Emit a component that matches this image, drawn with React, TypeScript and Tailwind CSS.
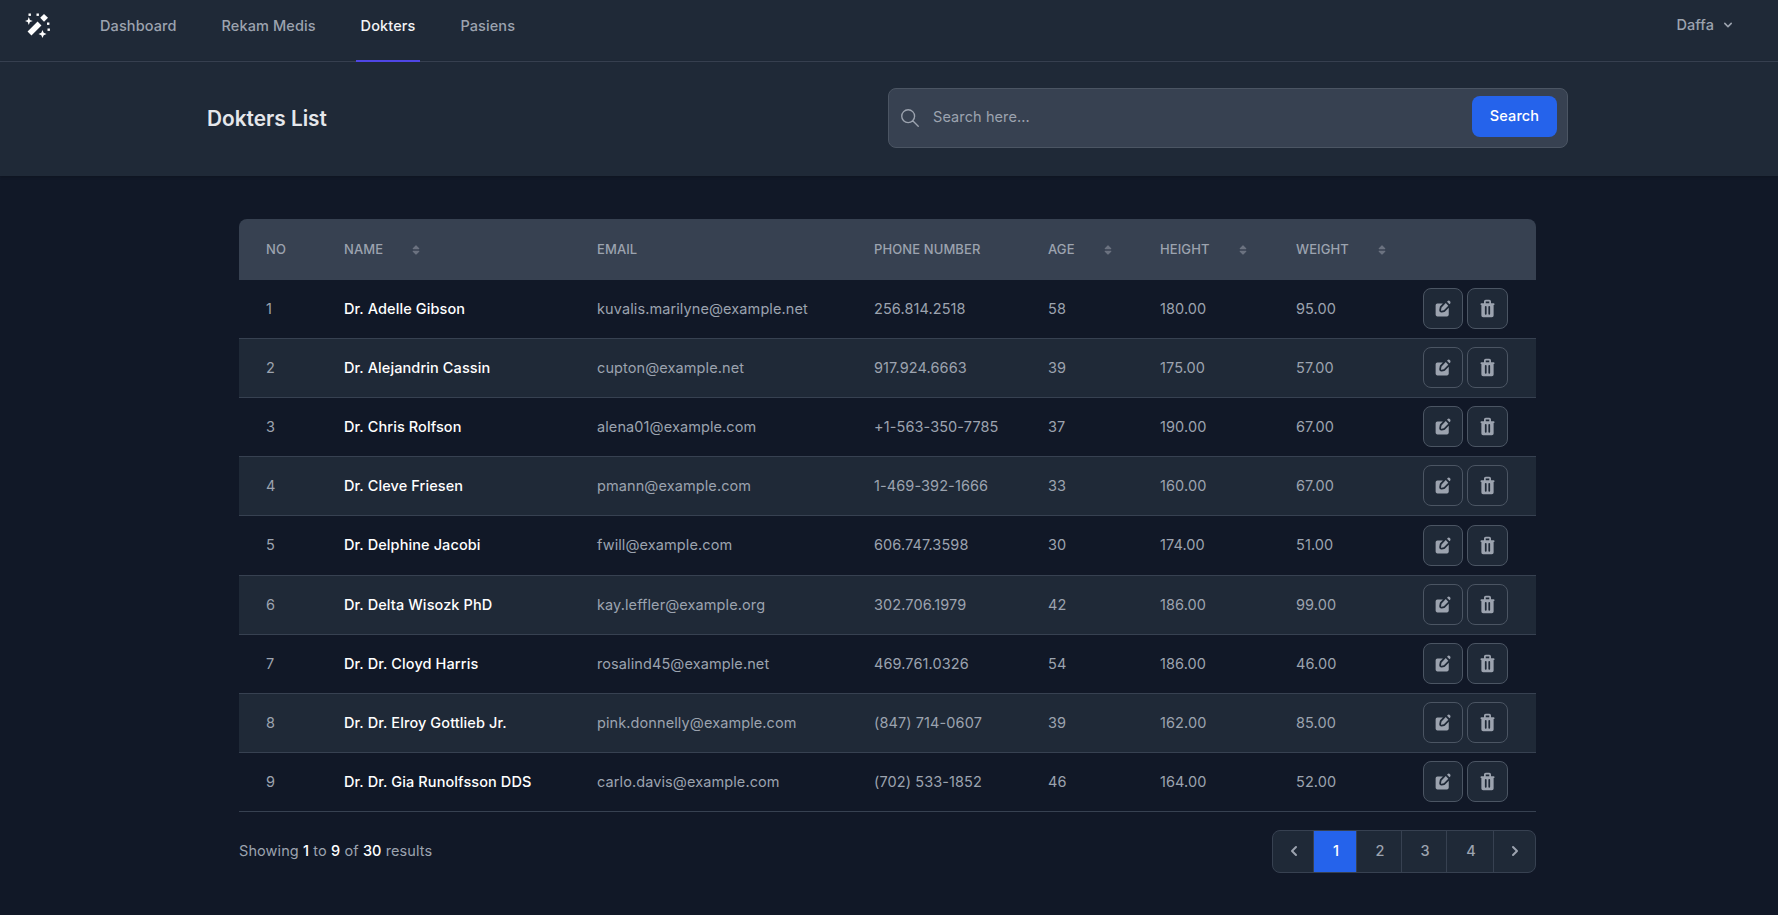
import { FaSort } from "react-icons/fa";
import { HiChevronDown, HiChevronLeft, HiChevronRight, HiOutlineSearch } from "react-icons/hi";

const doctors = [
  ["Dr. Adelle Gibson", "kuvalis.marilyne@example.net", "256.814.2518", "58", "180.00", "95.00"],
  ["Dr. Alejandrin Cassin", "cupton@example.net", "917.924.6663", "39", "175.00", "57.00"],
  ["Dr. Chris Rolfson", "alena01@example.com", "+1-563-350-7785", "37", "190.00", "67.00"],
  ["Dr. Cleve Friesen", "pmann@example.com", "1-469-392-1666", "33", "160.00", "67.00"],
  ["Dr. Delphine Jacobi", "fwill@example.com", "606.747.3598", "30", "174.00", "51.00"],
  ["Dr. Delta Wisozk PhD", "kay.leffler@example.org", "302.706.1979", "42", "186.00", "99.00"],
  ["Dr. Dr. Cloyd Harris", "rosalind45@example.net", "469.761.0326", "54", "186.00", "46.00"],
  ["Dr. Dr. Elroy Gottlieb Jr.", "pink.donnelly@example.com", "(847) 714-0607", "39", "162.00", "85.00"],
  ["Dr. Dr. Gia Runolfsson DDS", "carlo.davis@example.com", "(702) 533-1852", "46", "164.00", "52.00"],
];

const navLinks = ["Dashboard", "Rekam Medis", "Dokters", "Pasiens"];

// wand with sparkles, drawn from the reference
function Logo() {
  return (
    <svg viewBox="0 0 25 25" className="h-[25px] w-[25px]" fill="#ffffff">
      <line x1="4.5" y1="20.5" x2="14.5" y2="10.5" stroke="#ffffff" strokeWidth="5.5" />
      <polygon points="19,1 23,4.8 19,8.8 15.2,4.8" />
      <path d="M3.8 4 L4.9 6.9 L7.8 8 L4.9 9.1 L3.8 12 L2.7 9.1 L0 8 L2.7 6.9 Z" />
      <path d="M17.5 17 L18.7 19.8 L21.5 21 L18.7 22.2 L17.5 25 L16.3 22.2 L13.5 21 L16.3 19.8 Z" />
      <rect x="3.5" y="0.5" width="2.4" height="2.4" />
      <rect x="11.5" y="0.5" width="2.4" height="2.4" />
      <rect x="22" y="9.5" width="2.4" height="2.4" />
      <rect x="22.5" y="15.5" width="2.4" height="2.4" />
    </svg>
  );
}

function EditIcon() {
  return (
    <svg viewBox="0 0 24 24" className="h-[21px] w-[21px]" fill="currentColor">
      <path d="M11.32 6.176H5c-1.105 0-2 .949-2 2.118v10.588C3 20.052 3.895 21 5 21h11c1.105 0 2-.948 2-2.118v-7.75l-3.914 4.144A2.46 2.46 0 0 1 12.81 16l-2.681.568c-1.75.37-3.292-1.263-2.942-3.115l.536-2.839c.097-.512.335-.983.684-1.352l2.914-3.086Z" />
      <path d="M19.846 4.318a2.148 2.148 0 0 0-.437-.692 2.014 2.014 0 0 0-.654-.463 1.92 1.92 0 0 0-1.544 0 2.014 2.014 0 0 0-.654.463l-.546.578 2.852 3.02.546-.579a2.14 2.14 0 0 0 .437-.692 2.244 2.244 0 0 0 0-1.635ZM17.45 8.721 14.597 5.7 9.82 10.76a.54.54 0 0 0-.137.27l-.536 2.84c-.07.37.239.696.588.622l2.682-.567a.492.492 0 0 0 .255-.145l4.778-5.06Z" />
    </svg>
  );
}

function TrashIcon() {
  return (
    <svg viewBox="0 0 24 24" className="h-[21px] w-[21px]" fill="currentColor">
      <path d="M8.586 2.586A2 2 0 0 1 10 2h4a2 2 0 0 1 2 2v2h3a1 1 0 1 1 0 2v12a2 2 0 0 1-2 2H7a2 2 0 0 1-2-2V8a1 1 0 0 1 0-2h3V4a2 2 0 0 1 .586-1.414ZM10 6h4V4h-4v2Zm1 4a1 1 0 1 0-2 0v8a1 1 0 1 0 2 0v-8Zm4 0a1 1 0 1 0-2 0v8a1 1 0 1 0 2 0v-8Z" />
    </svg>
  );
}

function SortLabel({ label }: { label: string }) {
  return (
    <div className="flex items-center">
      <span>{label}</span>
      <FaSort className="ml-[27px] text-xs text-[#6b7280]" />
    </div>
  );
}

function rowHeight(index: number) {
  if (index === 0) return "h-[58px]";
  if (index === 4) return "h-[60px]";
  return "h-[59px]";
}

function App() {
  return (
    <div className="min-h-[915px] bg-[#111827] font-['Inter',sans-serif] text-[14.5px] tracking-[0.1px] text-[#9ca3af]">
      <nav className="flex h-[62px] items-stretch justify-between border-b border-[#374151] bg-[#1f2937] pl-[25px] pr-[42px]">
        <div className="flex items-stretch">
          <div className="flex h-[50px] w-[70px] items-center">
            <Logo />
          </div>
          <div className="flex gap-[35px]">
            {navLinks.map((link) => (
              <a
                key={link}
                className={
                  link === "Dokters"
                    ? "h-[62px] border-b-2 border-[#4f46e5] px-[5px] pt-[15px] font-medium text-[#f3f4f6]"
                    : "h-[62px] px-[5px] pt-[15px] font-medium text-[#9ca3af]"
                }
              >
                {link}
              </a>
            ))}
          </div>
        </div>
        <div className="flex h-[50px] items-center gap-1.5 font-medium">
          <span>Daffa</span>
          <HiChevronDown className="text-base" />
        </div>
      </nav>

      <header className="flex h-[114px] items-center justify-between bg-[#1f2937] pl-[207px] pr-[210px] shadow-sm">
        <h2 className="text-[20.8px] font-semibold tracking-normal text-[#e5e7eb]">Dokters List</h2>
        <div className="mb-0.5 flex h-[60px] w-[680px] items-center rounded-lg border border-[#4b5563] bg-[#374151] px-[10px]">
          <HiOutlineSearch className="text-[22px] text-[#9ca3af]" strokeWidth={1.5} />
          <span className="mb-0.5 ml-[12px] flex-1 text-[#9ca3af]">Search here...</span>
          <button className="mb-[3px] h-[41px] w-[85px] rounded-lg bg-[#2563eb] pb-0.5 text-[14.5px] font-medium text-white">Search</button>
        </div>
      </header>

      <main className="pl-[239px] pr-[242px] pt-[43px]">
        <table className="w-full table-fixed border-collapse text-left">
          <thead>
            <tr className="h-[61px] bg-[#374151] text-[13px] uppercase text-[#9ca3af]">
              <th className="w-[78px] rounded-tl-lg pl-[27px] font-medium">No</th>
              <th className="w-[253px] pl-[27px] font-medium"><SortLabel label="Name" /></th>
              <th className="w-[277px] pl-[27px] font-medium">Email</th>
              <th className="w-[174px] pl-[27px] font-medium">Phone Number</th>
              <th className="w-[112px] pl-[27px] font-medium"><SortLabel label="Age" /></th>
              <th className="w-[136px] pl-[27px] font-medium"><SortLabel label="Height" /></th>
              <th className="w-[127px] pl-[27px] font-medium"><SortLabel label="Weight" /></th>
              <th className="rounded-tr-lg"></th>
            </tr>
          </thead>
          <tbody>
            {doctors.map((doctor, index) => (
              <tr key={doctor[1]} className={`${rowHeight(index)} border-b border-[#374151] even:bg-[#1f2937]`}>
                <td className="pl-[27px]">{index + 1}</td>
                <td className="pl-[27px] font-medium text-white">{doctor[0]}</td>
                <td className="pl-[27px]">{doctor[1]}</td>
                <td className="pl-[27px]">{doctor[2]}</td>
                <td className="pl-[27px]">{doctor[3]}</td>
                <td className="pl-[27px]">{doctor[4]}</td>
                <td className="pl-[27px]">{doctor[5]}</td>
                <td className="pl-[27px]">
                  <div className="flex gap-[4px]">
                    <button className="flex h-[41px] w-10 items-center justify-center rounded-lg border border-[#4b5563] bg-[#1f2937]">
                      <EditIcon />
                    </button>
                    <button className="flex h-[41px] w-[41px] items-center justify-center rounded-lg border border-[#4b5563] bg-[#1f2937]">
                      <TrashIcon />
                    </button>
                  </div>
                </td>
              </tr>
            ))}
          </tbody>
        </table>

        <div className="mt-[18px] flex items-center justify-between">
          <p>
            Showing <span className="font-medium text-white">1</span> to <span className="font-medium text-white">9</span> of{" "}
            <span className="font-medium text-white">30</span> results
          </p>
          <div className="flex h-[43px] items-stretch overflow-hidden rounded-lg border border-[#374151] bg-[#1f2937]">
            <button className="flex w-10 items-center justify-center pl-px"><HiChevronLeft className="text-xl" /></button>
            <button className="w-11 border-x border-[#374151] bg-[#2563eb] pl-0.5 font-medium text-white">1</button>
            <button className="w-[45px] border-r border-[#374151] pl-0.5 font-medium">2</button>
            <button className="w-[45px] border-r border-[#374151] pl-0.5 font-medium">3</button>
            <button className="w-[47px] border-r border-[#374151] pl-0.5 font-medium">4</button>
            <button className="flex w-[41px] items-center justify-center"><HiChevronRight className="text-xl" /></button>
          </div>
        </div>
      </main>
    </div>
  );
}

export default App;
